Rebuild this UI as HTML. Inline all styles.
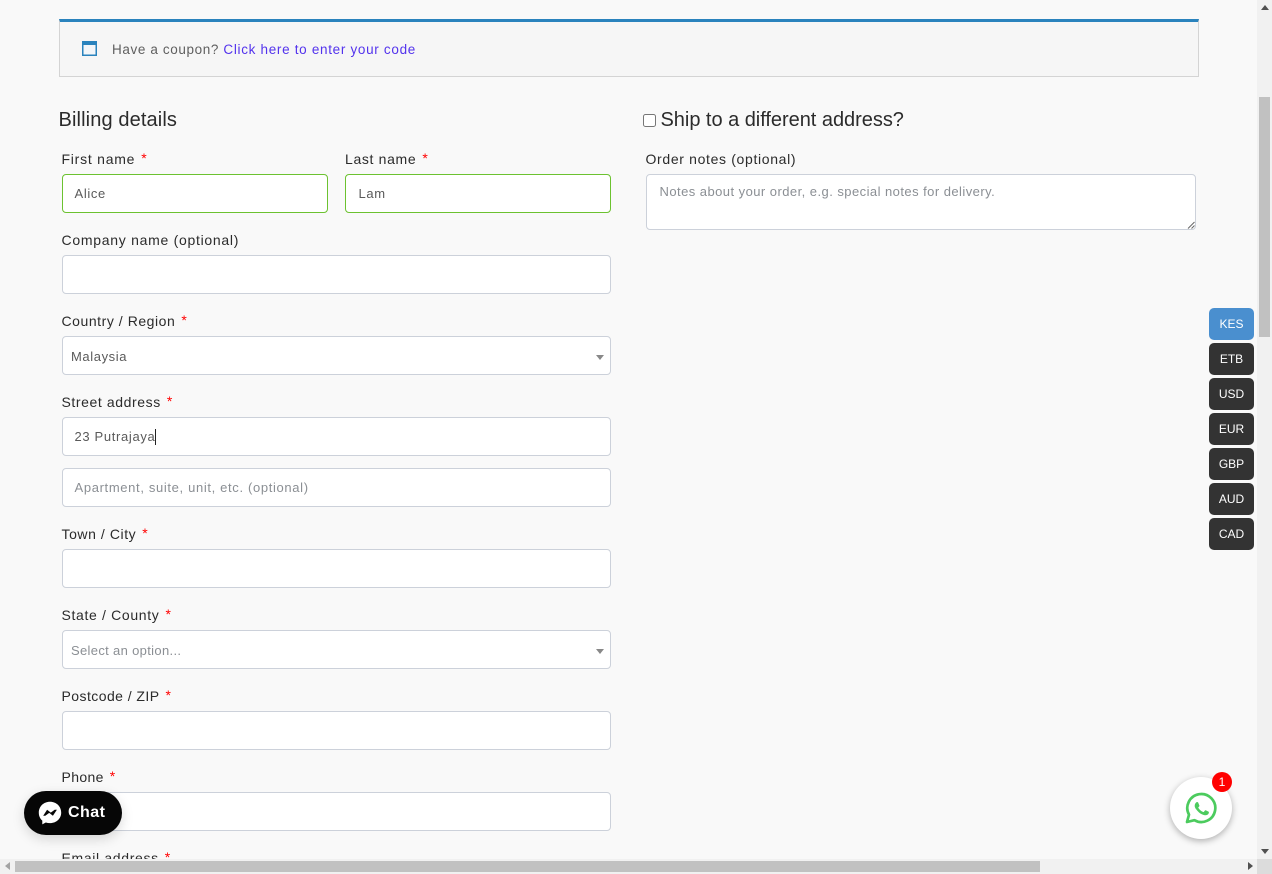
<!DOCTYPE html>
<html lang="en">
<head>
<meta charset="utf-8">
<title>Checkout</title>
<style>
html,body{margin:0;padding:0;width:1272px;height:874px;overflow:hidden;background:#f9f9f9;}
body{position:relative;font-family:"Liberation Sans",sans-serif;color:#333;}
.a{position:absolute;white-space:nowrap;}
.lb{position:absolute;white-space:nowrap;font-size:14px;line-height:16px;color:#2b2b2b;}
.lb i{font-style:normal;color:#f00;margin-left:6px;position:relative;top:-1px;letter-spacing:0;}
.in{position:absolute;box-sizing:border-box;height:39px;background:#fff;border:1px solid #ccd1da;border-radius:4px;font-size:13px;line-height:38px;letter-spacing:.65px;color:#5a5a5a;padding-left:11.5px;white-space:nowrap;}
.g{border-color:#6cc230;}
.ph{color:#8b8f94;}
.sel{padding-left:8px;line-height:39px;}
.sel:after{content:"";position:absolute;right:6px;top:18px;border-left:4px solid transparent;border-right:4px solid transparent;border-top:5px solid #888;}
.h{position:absolute;white-space:nowrap;font-size:20px;line-height:24px;color:#2b2b2b;}
.cur{position:absolute;left:1209px;width:45px;height:32px;border-radius:5px;background:#333;color:#fff;font-size:12px;line-height:33px;text-align:center;}
</style>
</head>
<body>

<div class="a" style="left:59px;top:19px;width:1140px;height:58px;box-sizing:border-box;background:#f6f6f6;border:1px solid #d4d4d4;border-top:3px solid #2a83bd;"></div>
<svg class="a" style="left:82px;top:41px" width="15" height="15" viewBox="0 0 15 15"><rect x=".75" y=".75" width="13.5" height="13.5" fill="#f3f6f9" stroke="#2a83bd" stroke-width="1.5"/><rect x="0" y="0" width="15" height="4" fill="#2a83bd"/></svg>
<div class="a" style="left:112px;top:42px;font-size:13.5px;line-height:16px;letter-spacing:.62px;color:#5f5f5f;">Have a coupon? <span style="color:#5333ed;letter-spacing:.69px">Click here to enter your code</span></div>

<div class="h" style="left:58.500px;top:108px;letter-spacing:.12px;">Billing details</div>
<input type="checkbox" class="a" style="left:643px;top:114px;margin:0;width:13px;height:13px;">
<div class="h" style="left:660.5px;top:108px;letter-spacing:-.03px;">Ship to a different address?</div>

<div class="lb" style="left:61.500px;top:151px;letter-spacing:.76px;">First name<i>*</i></div>
<div class="in g" style="left:62px;top:174px;width:266px;">Alice</div>
<div class="lb" style="left:345px;top:151px;letter-spacing:.66px;">Last name<i>*</i></div>
<div class="in g" style="left:345px;top:174px;width:266px;padding-left:12.5px;">Lam</div>

<div class="lb" style="left:61.500px;top:232px;letter-spacing:.72px;">Company name (optional)</div>
<div class="in" style="left:62px;top:255px;width:549px;"></div>

<div class="lb" style="left:61.500px;top:313px;letter-spacing:.55px;">Country / Region<i>*</i></div>
<div class="in sel" style="left:62px;top:336px;width:549px;letter-spacing:.6px;">Malaysia</div>

<div class="lb" style="left:61.500px;top:394px;letter-spacing:.59px;">Street address<i>*</i></div>
<div class="in" style="left:62px;top:417px;width:549px;letter-spacing:.66px;">23 Putrajaya<span style="display:inline-block;width:1px;height:16px;background:#222;vertical-align:-4px;"></span></div>
<div class="in ph" style="left:62px;top:468px;width:549px;">Apartment, suite, unit, etc. (optional)</div>

<div class="lb" style="left:61.500px;top:526px;letter-spacing:.57px;">Town / City<i>*</i></div>
<div class="in" style="left:62px;top:549px;width:549px;"></div>

<div class="lb" style="left:61.500px;top:607px;letter-spacing:.66px;">State / County<i>*</i></div>
<div class="in sel ph" style="left:62px;top:630px;width:549px;letter-spacing:.33px;">Select an option...</div>

<div class="lb" style="left:61.500px;top:688px;letter-spacing:.44px;">Postcode / ZIP<i>*</i></div>
<div class="in" style="left:62px;top:711px;width:549px;"></div>

<div class="lb" style="left:61.500px;top:769px;letter-spacing:.36px;">Phone<i>*</i></div>
<div class="in" style="left:62px;top:792px;width:549px;"></div>

<div class="lb" style="left:61.500px;top:850px;letter-spacing:.66px;">Email address<i>*</i></div>

<div class="lb" style="left:645.500px;top:151px;letter-spacing:.66px;">Order notes (optional)</div>
<div class="in ph" style="left:646px;top:174px;width:550px;height:56px;line-height:16px;padding-top:9px;padding-left:12.5px;letter-spacing:.45px;">Notes about your order, e.g. special notes for delivery.</div>
<svg class="a" style="left:1187px;top:221px" width="8" height="8" viewBox="0 0 8 8"><path d="M1 7.500L7.500 1M4.500 7.500L7.500 4.500" stroke="#666" stroke-width="1" fill="none"/></svg>

<div class="cur" style="top:308px;background:#4a8fcf;">KES</div>
<div class="cur" style="top:343px;">ETB</div>
<div class="cur" style="top:378px;">USD</div>
<div class="cur" style="top:413px;">EUR</div>
<div class="cur" style="top:448px;">GBP</div>
<div class="cur" style="top:483px;">AUD</div>
<div class="cur" style="top:518px;">CAD</div>

<!-- Messenger chat -->
<div class="a" style="left:24px;top:791px;width:98px;height:44px;border-radius:22px;background:#060606;box-shadow:0 4px 12px rgba(0,0,0,.15);"></div>
<svg class="a" style="left:38px;top:801px" width="24" height="24" viewBox="0 0 24 24"><path d="M12 .8C5.600.8.800 5.500.800 11.700c0 3.200 1.300 6 3.500 7.900v3.800l3.500-1.900c1.300.4 2.700.6 4.200.6 6.400 0 11.200-4.700 11.200-10.400C23.200 5.500 18.400.8 12 .8z" fill="#fff"/><path d="M5.200 14.800l3.900-6 3.700 2.800 3.900-2.800 2.200-.1-4 6-3.700-2.800-3.900 2.800z" fill="#060606"/></svg>
<div class="a" style="left:68px;top:803px;font-size:16px;line-height:19px;font-weight:bold;color:#fff;letter-spacing:.45px;">Chat</div>

<!-- WhatsApp -->
<div class="a" style="left:1170px;top:777px;width:62px;height:62px;border-radius:50%;background:#fff;box-shadow:0 2px 7px rgba(0,0,0,.3);"></div>
<svg class="a" style="left:1185px;top:792px" width="32" height="32" viewBox="0 0 32 32"><path d="M2 30l2-7.300A14 14 0 1 1 9.400 28.200z" fill="none" stroke="#4ccb5e" stroke-width="2.700" stroke-linejoin="round"/><path d="M11.500 8.800c-.4 0-1 .2-1.500.8-.6.7-1.600 1.700-1.600 3.700s1.500 4 1.700 4.200c.2.300 3 4.700 7.300 6.300 3.600 1.400 4.400 1.100 5.200 1 .8-.1 2.500-1 2.800-2 .4-1 .4-1.800.3-2-.1-.2-.4-.3-.8-.5l-3-1.400c-.4-.2-.7-.2-1 .2l-1.300 1.700c-.3.300-.5.300-.9.100-.4-.2-1.800-.7-3.400-2.100-1.300-1.100-2.100-2.500-2.400-2.900-.2-.4 0-.6.200-.8l.6-.7c.2-.2.300-.4.400-.7.100-.3.100-.5 0-.7l-1.300-3.200c-.4-.8-.7-.8-1-.8z" fill="#4ccb5e" transform="translate(2.800 2.800) scale(.82)"/></svg>
<div class="a" style="left:1212px;top:772px;width:20px;height:20px;border-radius:50%;background:#f00;color:#fff;font-size:12px;line-height:20px;text-align:center;">1</div>

<!-- Scrollbars -->
<div class="a" style="left:1257px;top:0;width:15px;height:859px;background:#f1f1f1;"></div>
<div class="a" style="left:1259px;top:97px;width:11px;height:240px;background:#c1c1c1;"></div>
<div class="a" style="left:1261px;top:5px;width:0;height:0;border-left:4px solid transparent;border-right:4px solid transparent;border-bottom:5px solid #505050;"></div>
<div class="a" style="left:1261px;top:849px;width:0;height:0;border-left:4px solid transparent;border-right:4px solid transparent;border-top:5px solid #505050;"></div>
<div class="a" style="left:0;top:859px;width:1257px;height:15px;background:#f1f1f1;"></div>
<div class="a" style="left:15px;top:861px;width:1025px;height:11px;background:#c1c1c1;"></div>
<div class="a" style="left:5px;top:862px;width:0;height:0;border-top:4px solid transparent;border-bottom:4px solid transparent;border-right:5px solid #a3a3a3;"></div>
<div class="a" style="left:1248px;top:862px;width:0;height:0;border-top:4px solid transparent;border-bottom:4px solid transparent;border-left:5px solid #505050;"></div>
<div class="a" style="left:1257px;top:859px;width:15px;height:15px;background:#dcdcdc;"></div>

</body>
</html>
